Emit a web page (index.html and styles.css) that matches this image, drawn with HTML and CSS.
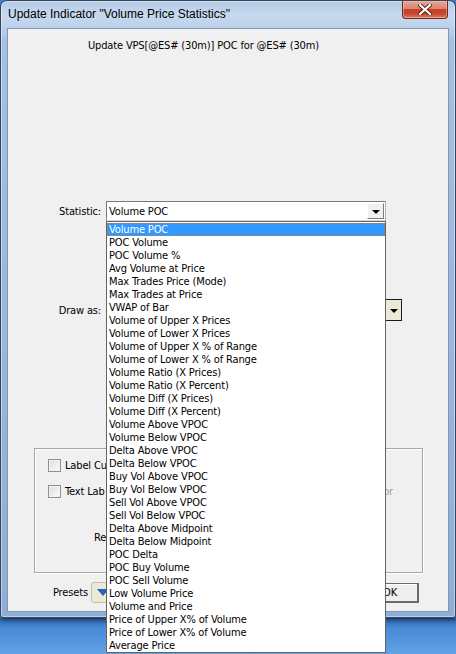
FILE: index.html
```html
<!DOCTYPE html>
<html>
<head>
<meta charset="utf-8">
<title>Update Indicator</title>
<link rel="stylesheet" href="styles.css">
</head>
<body>
<div class="desktop">
<div class="window">
  <div class="titlebar">
    <span class="title">Update Indicator "Volume Price Statistics"</span>
    <div class="close">
      <svg width="14" height="11" viewBox="0 0 14 11"><path d="M2 1 L12 10 M12 1 L2 10" stroke="#5a1e14" stroke-width="4" stroke-linecap="square"/><path d="M2 1 L12 10 M12 1 L2 10" stroke="#ffffff" stroke-width="2.2" stroke-linecap="square"/></svg>
    </div>
  </div>
  <div class="client">
    <div class="header">Update VPS[@ES# (30m)] POC for @ES# (30m)</div>
    <div class="row stat-row">
      <span class="label">Statistic:</span>
      <div class="combo">
        <span class="combo-text">Volume POC</span>
        <span class="combo-btn"><span class="tri"></span></span>
      </div>
    </div>
    <div class="row draw-row">
      <span class="label">Draw as:</span>
      <div class="combo old">
        <span class="combo-text"></span>
        <span class="combo-btn old-btn"><span class="tri"></span></span>
      </div>
    </div>
    <div class="group">
      <div class="check"><span class="box"></span><span class="clip">Label Cu</span></div>
      <div class="check check2"><span class="box"></span><span class="clip">Text Lab</span><span class="disabled">or</span></div>
      <div class="re">Re</div>
    </div>
    <div class="bottom-row">
      <span class="presets-label">Presets</span>
      <span class="presets-btn"><span class="blue-tri"></span></span>
      <span class="ok"><span class="ok-text">OK</span></span>
    </div>
  </div>
</div>
<div class="taskbar-strip"></div>
<ul class="droplist">
  <li class="sel">Volume POC</li>
  <li>POC Volume</li>
  <li>POC Volume %</li>
  <li>Avg Volume at Price</li>
  <li>Max Trades Price (Mode)</li>
  <li>Max Trades at Price</li>
  <li>VWAP of Bar</li>
  <li>Volume of Upper X Prices</li>
  <li>Volume of Lower X Prices</li>
  <li>Volume of Upper X % of Range</li>
  <li>Volume of Lower X % of Range</li>
  <li>Volume Ratio (X Prices)</li>
  <li>Volume Ratio (X Percent)</li>
  <li>Volume Diff (X Prices)</li>
  <li>Volume Diff (X Percent)</li>
  <li>Volume Above VPOC</li>
  <li>Volume Below VPOC</li>
  <li>Delta Above VPOC</li>
  <li>Delta Below VPOC</li>
  <li>Buy Vol Above VPOC</li>
  <li>Buy Vol Below VPOC</li>
  <li>Sell Vol Above VPOC</li>
  <li>Sell Vol Below VPOC</li>
  <li>Delta Above Midpoint</li>
  <li>Delta Below Midpoint</li>
  <li>POC Delta</li>
  <li>POC Buy Volume</li>
  <li>POC Sell Volume</li>
  <li>Low Volume Price</li>
  <li>Volume and Price</li>
  <li>Price of Upper X% of Volume</li>
  <li>Price of Lower X% of Volume</li>
  <li>Average Price</li>
</ul>
</div>
</body>
</html>
```

FILE: styles.css
```css
* { box-sizing: border-box; }
html, body { margin: 0; padding: 0; background: #3f7fcc; }
body {
  width: 456px;
  height: 654px;
  overflow: hidden;
  font-family: "DejaVu Sans Condensed", "DejaVu Sans", sans-serif;
  font-stretch: condensed;
  font-size: 11px;
  letter-spacing: -0.15px;
  color: #000;
}

.desktop {
  position: relative;
  width: 456px;
  height: 654px;
  background: #3f7fcc;
  display: flex;
  flex-direction: column;
}

.window {
  width: 456px;
  height: 618px;
  flex: none;
  border: 1px solid #34465e;
  border-radius: 7px 7px 3px 3px;
  background: linear-gradient(180deg, #b4cbe6 0, #c6d9ee 14px, #bcd1ea 27px, #a6c0e1 40px, #8eaed7 100%);
  padding: 0 7px 6px;
  display: flex;
  flex-direction: column;
  box-shadow: 1px 2px 4px rgba(0, 0, 0, 0.5), inset 0 0 0 1px rgba(255, 255, 255, 0.45);
  position: relative;
  z-index: 1;
}

.taskbar-strip {
  flex: 1;
  background: linear-gradient(180deg, #2e66b2 0, #4a8ad6 10px, #62a2e6 100%);
}

.titlebar {
  height: 28px;
  display: flex;
  justify-content: space-between;
  align-items: flex-start;
  flex: none;
}
.title {
  font-family: "Liberation Sans", Arial, sans-serif;
  font-stretch: normal;
  letter-spacing: 0;
  font-size: 12px;
  line-height: 15px;
  padding-top: 6px;
  color: #000;
}
.close {
  width: 46px;
  height: 18px;
  border: 1px solid #6b2a20;
  border-top: none;
  border-radius: 0 0 4px 4px;
  background: linear-gradient(180deg, #e6a797 0, #dc8470 45%, #c6412a 50%, #c9452c 75%, #df7e62 100%);
  display: flex;
  align-items: center;
  justify-content: center;
  box-shadow: inset 0 0 0 1px rgba(255, 200, 190, 0.5);
}
.close svg { display: block; }

.client {
  width: 440px;
  height: 582px;
  background: #f0f0f0;
  display: flex;
  flex-direction: column;
  box-shadow: 0 0 0 1px #7f96b4;
  flex: none;
}

.header {
  margin-top: 10px;
  padding-left: 80px;
  line-height: 13px;
}

.row {
  display: grid;
  grid-template-columns: 93px auto;
  column-gap: 5px;
  align-items: center;
}
.label { text-align: right; }
.stat-row { margin-top: 149px; }
.draw-row { margin-top: 78px; }

.combo {
  width: 280px;
  height: 20px;
  background: #fff;
  border: 1px solid #7a7a7a;
  border-right-color: #b0b0b0;
  border-bottom-color: #d8d8d8;
  display: flex;
  align-items: center;
  justify-content: space-between;
  padding: 1px 1px 1px 2px;
}
.combo-text { line-height: 13px; }
.combo-btn {
  width: 17px;
  height: 16px;
  background: #f0f0f0;
  border: 1px solid;
  border-color: #fff #7c7c7c #7c7c7c #fff;
  display: flex;
  align-items: center;
  justify-content: center;
}
.tri {
  width: 0;
  height: 0;
  border-left: 4px solid transparent;
  border-right: 4px solid transparent;
  border-top: 4px solid #000;
  margin-top: 2px;
}
.combo.old {
  width: 296px;
  height: 22px;
  border: 1px solid #1a1a1a;
  padding: 0;
}
.old-btn {
  height: 20px;
  width: 15px;
  background: #ece9d8;
  border: none;
}

.group {
  margin-top: 127px;
  margin-left: 26px;
  width: 389px;
  height: 125px;
  border: 1px solid #a6a6a6;
  box-shadow: inset 1px 1px 0 #fff, 1px 1px 0 #fff;
  padding: 10px 0 0 13px;
  display: flex;
  flex-direction: column;
}
.check {
  display: flex;
  align-items: center;
  gap: 4px;
  height: 13px;
  line-height: 13px;
}
.check2 { margin-top: 13px; margin-right: 29px; }
.box {
  width: 13px;
  height: 13px;
  border: 1px solid #8e8f8f;
  background: linear-gradient(135deg, #dcdcdc, #fbfbfb);
  box-shadow: inset 0 0 0 1px #f4f4f4;
  flex: none;
}
.disabled { margin-left: auto; color: #a0a0a0; }
.re { margin-top: 33px; margin-left: 46px; line-height: 13px; }

.bottom-row {
  margin-top: 9px;
  height: 21px;
  display: flex;
  align-items: center;
  padding-left: 45px;
}
.presets-label { line-height: 13px; }
.presets-btn {
  margin-left: 3px;
  width: 30px;
  height: 21px;
  border: 1px solid #c6bf9e;
  border-radius: 3px;
  background: #ece9d8;
  display: flex;
  align-items: center;
  padding-left: 5px;
}
.blue-tri {
  width: 0;
  height: 0;
  border-left: 6px solid transparent;
  border-right: 6px solid transparent;
  border-top: 7px solid #1e64b8;
}
.ok {
  margin-left: auto;
  margin-right: 29px;
  width: 58px;
  height: 20px;
  border: 1px solid #6a6a6a;
  box-shadow: inset -1px -1px 0 #6a6a6a, inset 1px 1px 0 #fff;
  background: #efefef;
  display: flex;
  align-items: center;
  justify-content: center;
  line-height: 13px;
}

.droplist {
  position: absolute;
  z-index: 2;
  left: 106px;
  top: 221px;
  width: 280px;
  margin: 0;
  padding: 1px 0 0;
  list-style: none;
  background: #fff;
  border: 1px solid #646464;
}
.droplist li {
  height: 13px;
  line-height: 13px;
  padding-left: 2px;
  white-space: nowrap;
  overflow: hidden;
}
.droplist li.sel {
  background: #3399ff;
  color: #fff;
  outline: 1px dotted #c8782c;
  outline-offset: -1px;
}
```
